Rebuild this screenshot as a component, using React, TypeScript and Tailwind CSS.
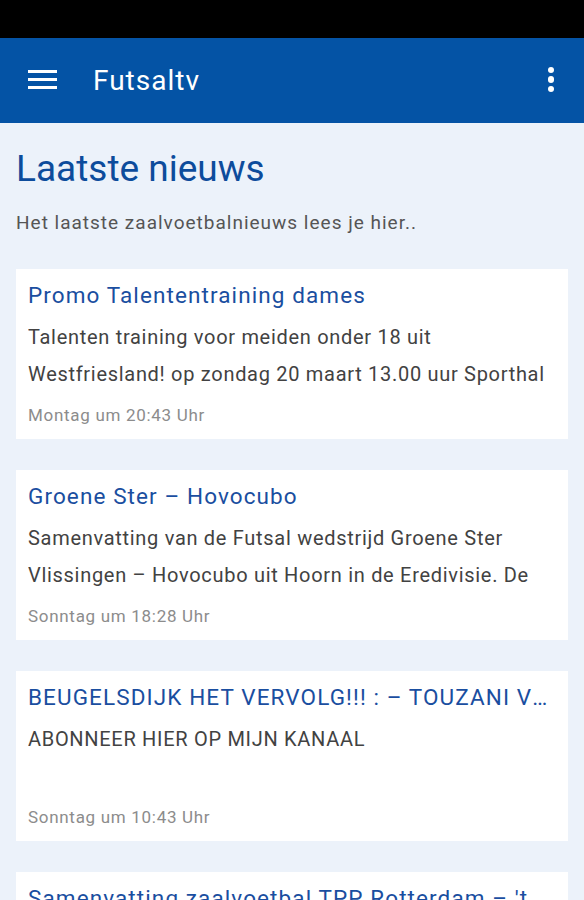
import { useState } from 'react';

interface NewsItem {
  title: string;
  excerpt: string;
  date: string;
  singleLine?: boolean;
}

const items: NewsItem[] = [
  {
    title: 'Promo Talententraining dames',
    excerpt: 'Talenten training voor meiden onder 18 uit Westfriesland! op zondag 20 maart 13.00 uur Sporthal',
    date: 'Montag um 20:43 Uhr',
  },
  {
    title: 'Groene Ster – Hovocubo',
    excerpt: 'Samenvatting van de Futsal wedstrijd Groene Ster Vlissingen – Hovocubo uit Hoorn in de Eredivisie. De',
    date: 'Sonntag um 18:28 Uhr',
  },
  {
    title: 'BEUGELSDIJK HET VERVOLG!!! : – TOUZANI VS. BEUGELSDIJK',
    excerpt: 'ABONNEER HIER OP MIJN KANAAL',
    date: 'Sonntag um 10:43 Uhr',
    singleLine: true,
  },
  {
    title: "Samenvatting zaalvoetbal TPP Rotterdam – 't Knooppunt",
    excerpt: 'Samenvatting van de zaalvoetbalwedstrijd TPP Rotterdam tegen de nummer twee van de Eredivisie',
    date: 'Samstag um 22:10 Uhr',
  },
];

const NewsCard = ({ item }: { item: NewsItem }) => (
  <article className="bg-white px-3 pt-3 pb-[14px]">
    {/* Title */}
    <h3
      className={
        item.singleLine
          ? 'text-[22.5px] leading-[28px] tracking-[1.1px] text-[#1a4ea0] truncate'
          : 'text-[22.5px] leading-[28px] tracking-[1.1px] text-[#1a4ea0] line-clamp-2'
      }
    >
      {item.title}
    </h3>
    {/* Excerpt, two lines max */}
    <p className="mt-[10px] h-[74px] overflow-hidden text-[20px] leading-[37px] tracking-[0.7px] text-[#424242]">
      {item.excerpt}
    </p>
    {/* Date */}
    <p className="mt-[12px] text-[17px] leading-[20px] tracking-[0.7px] text-[#8c8c8c]">{item.date}</p>
  </article>
);

export default function App() {
  const [menuOpen, setMenuOpen] = useState(false);

  return (
    <div className="w-[584px] h-[900px] overflow-hidden bg-[#ecf2fa] font-['Roboto',sans-serif]">
      {/* Status bar */}
      <div className="h-[38px] bg-black" />

      {/* App bar */}
      <header className="h-[85px] bg-[#0453a5] flex items-center pl-7 pr-[30px] text-white">
        <button className="flex flex-col gap-[5px] w-[29px] mt-[-2px]" onClick={() => setMenuOpen(!menuOpen)}>
          <span className="block h-[3px] bg-white" />
          <span className="block h-[3px] bg-white" />
          <span className="block h-[3px] bg-white" />
        </button>
        <h1 className="ml-[36px] text-[28px] leading-none tracking-[1px]">Futsaltv</h1>
        <button className="ml-auto flex flex-col gap-[3px] items-center mt-[-2px]">
          <span className="block w-[6.5px] h-[6.5px] rounded-full bg-white" />
          <span className="block w-[6.5px] h-[6.5px] rounded-full bg-white" />
          <span className="block w-[6.5px] h-[6.5px] rounded-full bg-white" />
        </button>
      </header>

      <main className="px-4">
        <h2 className="mt-[24px] text-[37px] leading-[44px] text-[#0d4c9c]">Laatste nieuws</h2>
        <p className="mt-[19px] text-[19px] leading-[26px] tracking-[1px] text-[#555]">
          Het laatste zaalvoetbalnieuws lees je hier..
        </p>

        <div className="mt-[33px] flex flex-col gap-[31px]">
          {items.map((item, index) => (
            <NewsCard key={index} item={item} />
          ))}
        </div>
      </main>
    </div>
  );
}
